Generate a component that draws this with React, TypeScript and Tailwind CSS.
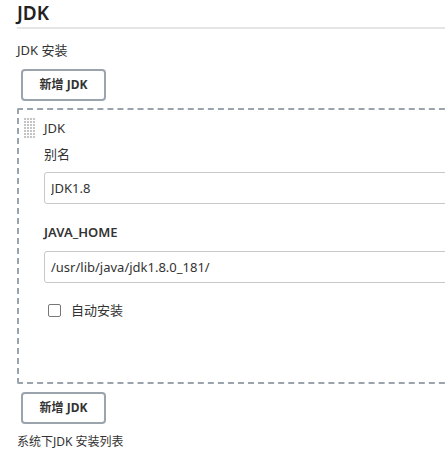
import React from "react"

const font = { fontFamily: '"Noto Sans", "Noto Sans CJK SC", sans-serif' }

const Grip = () => (
  <svg width="12" height="20" viewBox="0 0 12 20" className="shrink-0">
    {Array.from({ length: 7 }).map((_, r) =>
      Array.from({ length: 4 }).map((_, c) => (
        <rect key={`${r}-${c}`} x={c * 3} y={r * 3} width="2" height="2" fill="#c4c4c4" />
      ))
    )}
  </svg>
)

const AddButton = () => (
  <button className="ml-[4px] flex h-[32px] w-[85px] items-center justify-center rounded-[4px] border-2 border-[#9ba4ad] bg-white text-[12px] font-bold text-[#333]">
    新增 JDK
  </button>
)

export default function App() {
  return (
    <div className="h-[462px] w-[445px] overflow-hidden bg-white pl-[17px] text-[#333]" style={font}>
      <div className="border-b-2 border-[#e5e5e5] pt-[2px] pb-[3px]">
        <h1 className="text-[19px] font-semibold leading-[22px] text-[#222]">JDK</h1>
      </div>
      <p className="mt-[12px] text-[13px] leading-[18px]">JDK 安装</p>
      <div className="mt-[10px]">
        <AddButton />
      </div>
      <div className="mt-[7px] -mr-[20px] h-[276px] rounded-[2px] border-2 border-dashed border-[#9ba4ad] pt-[8px] pl-[5px]">
        <div className="flex items-start gap-[8px]">
          <Grip />
          <div className="flex-1">
            <p className="text-[13px] leading-[20px]">JDK</p>
            <p className="mt-[7px] text-[13px] leading-[18px]">别名</p>
            <input
              readOnly
              value="JDK1.8"
              className="mt-[9px] block h-[32px] w-full rounded-l-[3px] border border-[#c8c8c8] px-[6px] text-[13px] text-[#333] outline-none"
              style={font}
            />
            <p className="mt-[19px] text-[13px] font-semibold leading-[18px]">JAVA_HOME</p>
            <input
              readOnly
              value="/usr/lib/java/jdk1.8.0_181/"
              className="mt-[10px] block h-[32px] w-full rounded-l-[3px] border border-[#c8c8c8] px-[6px] text-[13px] text-[#333] outline-none"
              style={font}
            />
            <label className="mt-[18px] ml-[4px] flex items-center gap-[10px] text-[13px] leading-[18px]">
              <span className="h-[13px] w-[13px] rounded-[2px] border border-[#777] bg-white" />
              自动安装
            </label>
          </div>
        </div>
      </div>
      <div className="mt-[8px]">
        <AddButton />
      </div>
      <p className="mt-[9px] text-[12px] leading-[17px]">系统下JDK 安装列表</p>
    </div>
  )
}
